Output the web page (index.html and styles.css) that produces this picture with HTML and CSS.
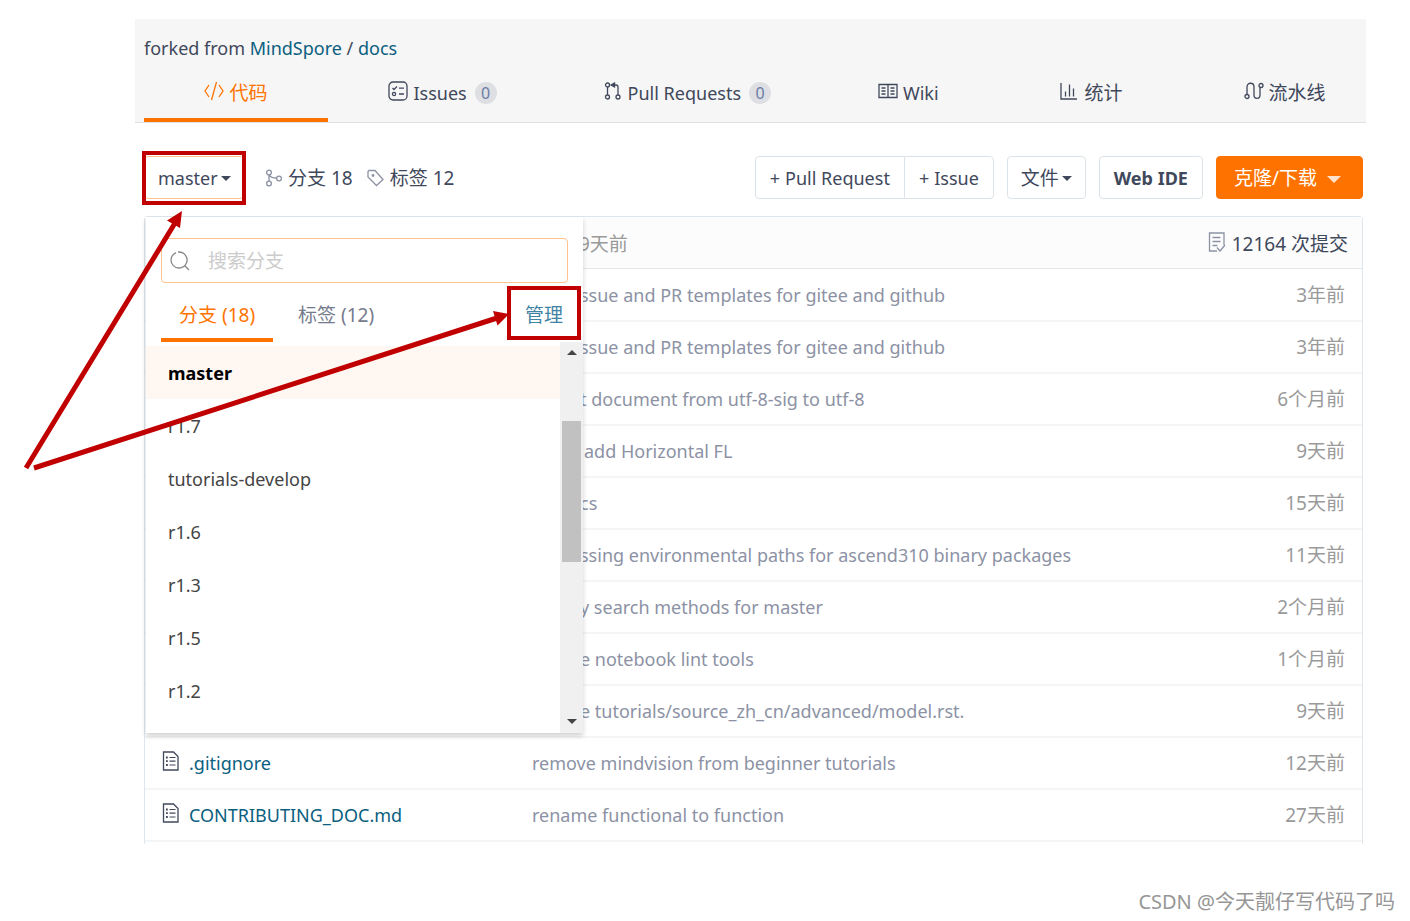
FILE: index.html
```html
<!DOCTYPE html>
<html lang="zh-CN">
<head>
<meta charset="utf-8">
<title>MindSpore / docs</title>
<link rel="stylesheet" href="styles.css">
</head>
<body>
<svg class="defs" aria-hidden="true">
  <symbol id="file" viewBox="0 0 18 20"><path d="M1.500 1h10l4.500 4.500V19h-14.500z" fill="none" stroke="currentColor" stroke-width="1.300"/><path d="M4 6.500h1.800M4 10.200h1.800M4 14h1.800" stroke="currentColor" stroke-width="1.800"/><path d="M7.500 6.500h6M7.500 10.200h6M7.500 14h6" stroke="currentColor" stroke-width="1.200"/></symbol>
</svg>
<div class="page">
  <header class="repo-head">
    <p class="fork">forked from <a href="#">MindSpore</a> / <a href="#">docs</a></p>
    <nav class="tabs">
      <a class="tab zh active" href="#"><svg width="20" height="20" viewBox="0 0 20 20"><path d="M5 4L1 10l4 6M15 4l4 6-4 6M12.500 1l-5 18"/></svg>代码</a>
      <a class="tab" href="#"><svg width="20" height="20" viewBox="0 0 20 20"><rect x="1" y="1" width="18" height="18" rx="4"/><path d="M4.500 7l1.500 1.500L9 5.500M11 7.200h5M11 13h5"/><circle cx="6" cy="13" r="1.600"/></svg><span>Issues</span><span class="badge">0</span></a>
      <a class="tab" href="#"><svg class="pr" width="17" height="18" viewBox="0 0 17 18"><circle cx="3.500" cy="3" r="2"/><circle cx="3.500" cy="15" r="2"/><circle cx="14" cy="15" r="2"/><path d="M3.500 5v8M14 13V5q0-2-2-2H9"/><path class="solid" d="M7 3l3.500-2v4z"/></svg><span>Pull Requests</span><span class="badge">0</span></a>
      <a class="tab" href="#"><svg width="20" height="16" viewBox="0 0 20 16"><path d="M1 1.500h18v13H1zM10 1.500v13M3.500 5h4M3.500 8h4M3.500 11h4M12.500 5h4M12.500 8h4M12.500 11h4"/></svg>Wiki</a>
      <a class="tab zh" href="#"><svg class="stat" width="18" height="18" viewBox="0 0 18 18"><path d="M1 1v16h16M5.500 14.500v-5M9.500 14.500v-12M13.500 14.500v-8"/></svg>统计</a>
      <a class="tab zh" href="#"><svg width="20" height="20" viewBox="0 0 20 20"><circle cx="3" cy="15.500" r="2"/><circle cx="17" cy="4.500" r="2"/><path d="M3 13.500V6c0-5 7-5 7 0v8c0 4.500 6 4.500 6 0V6.500"/></svg>流水线</a>
    </nav>
  </header>

  <main class="repo">
    <div class="toolbar">
      <button class="btn branch" type="button">master<i class="caret"></i></button>
      <a class="stat-link first" href="#"><svg width="17" height="18" viewBox="0 0 17 18"><circle cx="4" cy="3.500" r="2.400"/><circle cx="4" cy="14.500" r="2.400"/><circle cx="14" cy="9.500" r="2.400"/><path d="M4 6v6M4.500 6q1 3 7 3"/></svg>分支 18</a>
      <a class="stat-link" href="#"><svg width="17" height="18" viewBox="0 0 17 18"><path d="M1 2.500V8l8.500 8.500 6.500-6L8 1.500H2z"/><circle cx="6" cy="6.500" r=".8"/></svg>标签 12</a>
      <div class="group">
        <button class="btn" type="button"><span class="plus">+</span>Pull Request</button>
        <button class="btn" type="button"><span class="plus">+</span>Issue</button>
      </div>
      <button class="btn files zh" type="button">文件<i class="caret"></i></button>
      <button class="btn ide" type="button">Web IDE</button>
      <button class="btn clone zh" type="button">克隆/下载<i class="caret big"></i></button>
    </div>

    <section class="tree">
      <div class="commit">
        <span class="when">9天前</span>
        <a href="#"><svg width="18" height="20" viewBox="0 0 18 20"><path d="M9 19H1.500V1H16v12M4.500 5.500h8M4.500 9.500h8M4.500 13.500h5M9 15.500l3 3.500 5-6"/></svg>12164 次提交</a>
      </div>
      <table class="list">
        <tbody>
          <tr><td class="name"></td><td class="msg cut">ssue and PR templates for gitee and github</td><td class="time">3年前</td></tr>
          <tr><td class="name"></td><td class="msg cut">ssue and PR templates for gitee and github</td><td class="time">3年前</td></tr>
          <tr><td class="name"></td><td class="msg cut">t document from utf-8-sig to utf-8</td><td class="time">6个月前</td></tr>
          <tr><td class="name"></td><td class="msg word">add Horizontal FL</td><td class="time">9天前</td></tr>
          <tr><td class="name"></td><td class="msg cut">cs</td><td class="time">15天前</td></tr>
          <tr><td class="name"></td><td class="msg cut">ssing environmental paths for ascend310 binary packages</td><td class="time">11天前</td></tr>
          <tr><td class="name"></td><td class="msg cut">y search methods for master</td><td class="time">2个月前</td></tr>
          <tr><td class="name"></td><td class="msg cut">e notebook lint tools</td><td class="time">1个月前</td></tr>
          <tr><td class="name"></td><td class="msg cut">e tutorials/source_zh_cn/advanced/model.rst.</td><td class="time">9天前</td></tr>
          <tr><td class="name"><a href="#"><svg width="18" height="20"><use href="#file"/></svg>.gitignore</a></td><td class="msg">remove mindvision from beginner tutorials</td><td class="time">12天前</td></tr>
          <tr><td class="name"><a href="#"><svg width="18" height="20"><use href="#file"/></svg>CONTRIBUTING_DOC.md</a></td><td class="msg">rename functional to function</td><td class="time">27天前</td></tr>
        </tbody>
      </table>

      <div class="menu">
        <label class="search">
          <svg width="20" height="20" viewBox="0 0 20 20"><path d="M6 1.600A8 8 0 1 0 9 1M9 1a8 8 0 0 0-1 0M15 15l4 4"/></svg>
          <input type="text" placeholder="搜索分支" aria-label="搜索分支">
        </label>
        <div class="menu-tabs">
          <button class="menu-tab on" type="button">分支 (18)</button>
          <button class="menu-tab" type="button">标签 (12)</button>
          <a class="manage" href="#">管理</a>
        </div>
        <div class="scroll">
          <ul class="branches">
            <li class="current">master</li>
            <li>r1.7</li>
            <li>tutorials-develop</li>
            <li>r1.6</li>
            <li>r1.3</li>
            <li>r1.5</li>
            <li>r1.2</li>
          </ul>
          <div class="bar"><i class="caret up"></i><div class="thumb"></div><i class="caret down"></i></div>
        </div>
      </div>
    </section>
  </main>
  <footer class="mark">CSDN @今天靓仔写代码了吗</footer>

  <svg class="notes" width="600" height="480" viewBox="0 0 600 480" aria-hidden="true">
    <g fill="none" stroke="#c00000">
      <rect x="144" y="153" width="100" height="50" stroke-width="4"/>
      <rect x="509" y="288" width="70" height="50" stroke-width="4"/>
      <path d="M26 468L175 223M34 468L497 318" stroke-width="5"/>
    </g>
    <path fill="#c00000" stroke="none" d="M182 211l-15 9.500 13 7.500zM509 314l-16-3 4.500 14.500z"/>
  </svg>
</div>
</body>
</html>
```
FILE: styles.css
```css
* { box-sizing: border-box; }
body {
  margin: 0;
  background: #fff;
  color: #40485b;
  font: 18px/28px "Noto Sans", "Noto Sans CJK SC", sans-serif;
}
a { color: #0b6080; text-decoration: none; }
button, input { font: inherit; color: inherit; }
svg { flex: none; fill: none; stroke: currentColor; stroke-width: 1.3; }
.defs { position: absolute; width: 0; height: 0; }
.page { position: relative; padding-top: 19px; }
.zh, .stat-link, .commit, .time, .search, .menu-tabs { font-size: 19px; }

.repo-head {
  margin: 0 44px 0 135px;
  padding-left: 9px;
  background: #f6f6f6;
  border-bottom: 1px solid #dfe1e4;
  overflow: hidden;
}
.fork { margin: 0; padding: 15px 0 6px; }
.tabs { display: flex; margin-right: -20px; }
.tab {
  display: flex;
  flex: 1 1 auto;
  align-items: center;
  justify-content: center;
  gap: 5px;
  height: 54px;
  padding-bottom: 4px;
  color: #40485b;
}
.tab svg { margin-bottom: 4px; }
.tab .pr, .tab .stat { margin-right: 2px; }
.tab .solid { fill: currentColor; }
.tab.active { color: #fe7300; border-bottom: 4px solid #fe7300; padding-bottom: 0; }
.badge {
  margin: 0 -14px 0 3px;
  width: 22px;
  border-radius: 11px;
  background: #dddfe2;
  color: #6b7ba8;
  font-size: 16px;
  line-height: 22px;
  text-align: center;
}

.repo { margin: 0 47px 0 144px; }
.toolbar { display: flex; align-items: center; padding: 33px 0 17px; }
.btn {
  height: 43px;
  padding: 0 13px;
  border: 1px solid #dce3e8;
  border-radius: 4px;
  background: #fff;
  white-space: nowrap;
}
.caret {
  display: inline-block;
  margin-left: 3px;
  border: 5px solid transparent;
  border-top-color: currentColor;
  border-bottom: 0;
  vertical-align: 4px;
}
.caret.big { margin-left: 10px; border-width: 7px 7px 0; vertical-align: 2px; opacity: .8; }
.branch { width: 100px; border-color: #ffc28c; }
.stat-link { display: flex; align-items: center; gap: 6px; margin-left: 14px; color: #40485b; }
.stat-link.first { margin-left: 21px; }
.stat-link svg { color: #8c92a4; }
.group { display: flex; margin-left: auto; }
.group .btn { padding: 0 14px; }
.group .btn:first-child { border-radius: 4px 0 0 4px; }
.group .btn:last-child { margin-left: -1px; border-radius: 0 4px 4px 0; }
.plus { margin-right: 5px; }
.files { margin-left: 13px; }
.ide { margin-left: 13px; padding: 0 14px; font-weight: 700; }
.clone { margin-left: 13px; padding: 0 21px 0 17px; background: #fe7300; border-color: #fe7300; color: #fff; }

.tree {
  position: relative;
  padding-bottom: 2px;
  border: 1px solid #dfe6ec;
  border-bottom: 0;
  border-radius: 4px 4px 0 0;
}
.commit {
  display: flex;
  justify-content: space-between;
  align-items: center;
  height: 52px;
  padding: 2px 14px 0 434px;
  background: #fcfcfc;
  border-bottom: 1px solid #e3e8ec;
}
.commit a { display: flex; gap: 6px; align-items: center; color: #40485b; }
.commit svg { margin-bottom: 4px; color: #8c92a4; }
.when { color: #9a9a9a; }
.list { width: 100%; border-collapse: collapse; table-layout: fixed; }
.list td { height: 52px; padding: 0; border-bottom: 2px solid #f3f5f7; }
.list .name { width: 387px; padding-left: 17px; }
.name a { display: flex; align-items: center; gap: 9px; }
.name svg { margin-bottom: 4px; color: #40485b; }
.list .msg { color: #8c92a4; white-space: nowrap; }
.list .cut { padding-left: 48px; }
.list .word { padding-left: 52px; }
.list .time { width: 140px; padding-right: 17px; text-align: right; color: #9a9a9a; }

.menu {
  position: absolute;
  top: 0;
  left: 1px;
  width: 437px;
  padding-top: 21px;
  background: #fff;
  box-shadow: 0 3px 5px rgba(0, 0, 0, .18);
}
.search {
  display: flex;
  align-items: center;
  gap: 18px;
  height: 45px;
  margin: 0 15px;
  padding: 0 8px;
  border: 1px solid #ffc28c;
  border-radius: 4px;
  color: #888;
}
.search input { flex: 1; min-width: 0; padding: 0; border: 0; outline: 0; background: none; }
.search input::placeholder { color: #ccc; opacity: 1; }
.menu-tabs { display: flex; margin: 5px 15px 0; height: 54px; }
.menu-tab { padding: 4px 18px 0; border: 0; border-bottom: 4px solid transparent; background: none; color: #757b8c; }
.menu-tab.on { margin-right: 7px; border-color: #fe7300; color: #fe7300; }
.manage { margin: 13px 5px 0 auto; color: #4183a4; }
.scroll { display: flex; }
.branches { flex: 1; margin: 0; padding: 4px 0 16px; list-style: none; color: #444; }
.branches li { height: 53px; padding: 0 22px; line-height: 54px; }
.branches .current { background: #fff7f1; color: #000; font-weight: 700; }
.bar { display: flex; flex-direction: column; align-items: center; width: 23px; padding: 8px 0 9px; background: #f0f0f0; color: #444; }
.bar .caret { margin: 0; }
.bar .up { transform: rotate(180deg); }
.bar .down { margin-top: auto; }
.thumb { width: 19px; height: 141px; margin-top: 66px; background: #c1c1c1; }

.mark { padding: 44px 15px 0 0; text-align: right; font-size: 20px; color: #969696; }
.notes { position: absolute; top: 0; left: 0; pointer-events: none; }
```
